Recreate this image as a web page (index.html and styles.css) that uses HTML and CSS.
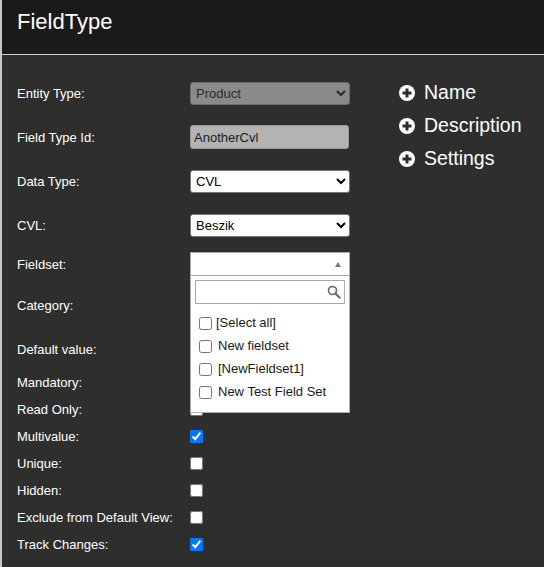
FILE: index.html
```html
<!DOCTYPE html>
<html>

<head>
	<link rel="stylesheet" href="styles.css">
</head>

<body>
	<div class="page">
		<div class="header">FieldType</div>
		<div class="content">
			<div class="form">
				<div class="row tall">
					<div class="label">Entity Type:</div>
					<select class="select disabled" disabled><option>Product</option></select>
				</div>
				<div class="row tall">
					<div class="label">Field Type Id:</div>
					<input class="text readonly" type="text" value="AnotherCvl" readonly>
				</div>
				<div class="row tall">
					<div class="label">Data Type:</div>
					<select class="select"><option>CVL</option></select>
				</div>
				<div class="row tall">
					<div class="label">CVL:</div>
					<select class="select"><option>Beszik</option></select>
				</div>
				<div class="row fieldset">
					<div class="label">Fieldset:</div>
					<div class="multi">
						<div class="multi_box">
							<span class="arrow_up"></span>
						</div>
						<div class="popup">
							<div class="search">
								<svg width="14" height="14" viewBox="0 0 14 14">
									<circle cx="5.5" cy="5.5" r="4" fill="none" stroke="#666" stroke-width="1.6"/>
									<path d="M8.5 8.5 L12.5 12.5" stroke="#666" stroke-width="2.2" stroke-linecap="round"/>
								</svg>
							</div>
							<div class="items">
								<label class="item"><input type="checkbox">[Select all]</label>
								<label class="item"><input type="checkbox"><span class="pad">New fieldset</span></label>
								<label class="item"><input type="checkbox"><span class="pad">[NewFieldset1]</span></label>
								<label class="item"><input type="checkbox"><span class="pad">New Test Field Set</span></label>
							</div>
						</div>
					</div>
				</div>
				<div class="row category">
					<div class="label">Category:</div>
					<div class="multi_box"></div>
				</div>
				<div class="row defval">
					<div class="label">Default value:</div>
					<input class="text" type="text">
				</div>
				<div class="row check">
					<div class="label">Mandatory:</div>
					<input type="checkbox">
				</div>
				<div class="row check">
					<div class="label">Read Only:</div>
					<input type="checkbox">
				</div>
				<div class="row check">
					<div class="label">Multivalue:</div>
					<input type="checkbox" checked>
				</div>
				<div class="row check">
					<div class="label">Unique:</div>
					<input type="checkbox">
				</div>
				<div class="row check">
					<div class="label">Hidden:</div>
					<input type="checkbox">
				</div>
				<div class="row check">
					<div class="label">Exclude from Default View:</div>
					<input type="checkbox">
				</div>
				<div class="row check">
					<div class="label">Track Changes:</div>
					<input type="checkbox" checked>
				</div>
			</div>
			<div class="side">
				<div class="side_item">
					<svg class="plus" width="16" height="16" viewBox="0 0 16 16">
						<circle cx="8" cy="8" r="8" fill="#fff"/>
						<path d="M8 3.5 V12.5 M3.5 8 H12.5" stroke="#2e2e2d" stroke-width="3"/>
					</svg>Name
				</div>
				<div class="side_item">
					<svg class="plus" width="16" height="16" viewBox="0 0 16 16">
						<circle cx="8" cy="8" r="8" fill="#fff"/>
						<path d="M8 3.5 V12.5 M3.5 8 H12.5" stroke="#2e2e2d" stroke-width="3"/>
					</svg>Description
				</div>
				<div class="side_item">
					<svg class="plus" width="16" height="16" viewBox="0 0 16 16">
						<circle cx="8" cy="8" r="8" fill="#fff"/>
						<path d="M8 3.5 V12.5 M3.5 8 H12.5" stroke="#2e2e2d" stroke-width="3"/>
					</svg>Settings
				</div>
			</div>
		</div>
	</div>
</body>

</html>
```

FILE: styles.css
```css
body {
	margin: 0;
	padding: 0;
	width: 544px;
	height: 567px;
	overflow: hidden;
	background: #2e2e2d;
	font-family: "Liberation Sans", Arial, sans-serif;
}
.page {
	min-height: 567px;
	border-left: 2px solid #c8c8c8;
	background: #2e2e2d;
}
.header {
	height: 45px;
	padding: 9px 0 0 15px;
	background: #1a1a1a;
	border-bottom: 1px solid #d0d0d0;
	color: #fff;
	font-size: 22px;
	line-height: 26px;
}
.content {
	display: flex;
	padding: 16px 0 0 15px;
}
.form {
	width: 333px;
}
.row {
	display: flex;
	align-items: center;
}
.row.tall { height: 44px; }
.row.fieldset { height: 34px; }
.row.category { height: 48px; }
.row.defval { height: 40px; }
.row.check { height: 27px; }
.label {
	width: 173px;
	flex: none;
	color: #fff;
	font-size: 13px;
}
.select {
	width: 160px;
	height: 23px;
	margin: 0;
	font: 13px "Liberation Sans", Arial, sans-serif;
	color: #000;
	background-color: #fff;
	border: 1px solid #767676;
	border-radius: 3px;
	padding: 0 1px;
}
.select.disabled {
	background-color: #8a8a8a;
	color: #2a2a2a;
	border-color: #6a6a6a;
	opacity: 1;
}
.text {
	box-sizing: border-box;
	width: 159px;
	height: 24px;
	margin: 0;
	padding: 0 3px;
	font: 13px "Liberation Sans", Arial, sans-serif;
	color: #1a1a1a;
	background: #fff;
	border: 1px solid #8a8a8a;
	border-radius: 3px;
	outline: none;
}
.text.readonly {
	background: #b3b3b3;
	border-color: #9a9a9a;
}
.row input[type=checkbox] {
	margin: 0;
	width: 13px;
	height: 13px;
}
.multi {
	position: relative;
}
.multi_box {
	box-sizing: border-box;
	width: 160px;
	height: 24px;
	background: #fff;
	border: 1px solid #a8a8a8;
	position: relative;
}
.arrow_up {
	position: absolute;
	right: 8px;
	top: 9px;
	width: 0;
	height: 0;
	border-left: 3.5px solid transparent;
	border-right: 3.5px solid transparent;
	border-bottom: 5px solid #7a7a7a;
}
.popup {
	position: absolute;
	top: 24px;
	left: 0;
	z-index: 2;
	box-sizing: border-box;
	width: 160px;
	height: 137px;
	background: #fff;
	border: 1px solid #b0b0b0;
	border-top: none;
	padding: 4px 4px 0 4px;
}
.search {
	box-sizing: border-box;
	height: 24px;
	border: 1px solid #a8a8a8;
	display: flex;
	align-items: center;
	justify-content: flex-end;
	padding-right: 3px;
}
.items {
	padding: 7px 0 0 4px;
}
.item {
	display: flex;
	align-items: center;
	height: 23px;
	font-size: 13px;
	color: #1a1a1a;
}
.row .item input[type=checkbox] {
	margin: 2px 4px 0 0;
}
.pad {
	padding-left: 2px;
}
.side {
	margin-left: 49px;
	padding-top: 5px;
}
.side_item {
	display: flex;
	align-items: center;
	height: 33px;
	color: #fff;
	font-size: 19.5px;
}
.plus {
	margin-right: 9px;
}
```
